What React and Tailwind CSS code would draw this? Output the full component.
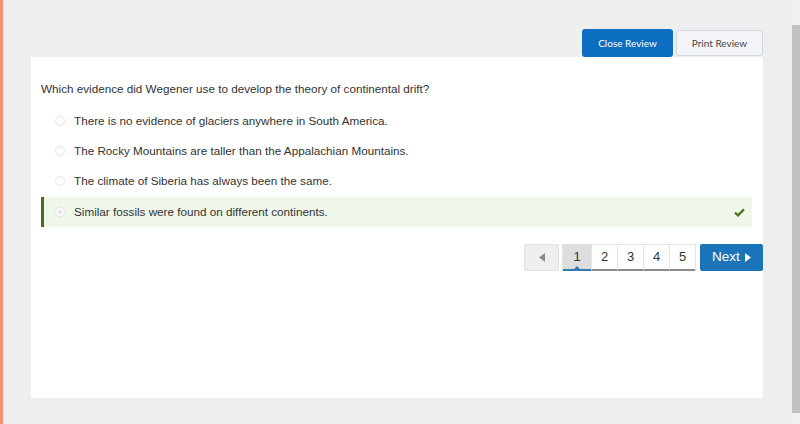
import React from "react";

const options = [
  "There is no evidence of glaciers anywhere in South America.",
  "The Rocky Mountains are taller than the Appalachian Mountains.",
  "The climate of Siberia has always been the same.",
];

function Radio({ checked }) {
  return (
    <span className="flex h-[10px] w-[10px] items-center justify-center rounded-full border border-[#e6e6e6] bg-white">
      {checked && <span className="h-[4px] w-[4px] rounded-full bg-[#e2e2e2]" />}
    </span>
  );
}

export default function App() {
  return (
    <div
      className="flex h-[424px] w-[800px] overflow-hidden bg-[#eeeeee]"
      style={{ fontFamily: '"Liberation Sans", Arial, sans-serif' }}
    >
      <div className="w-[3px] shrink-0 bg-[#f7916d]" />
      <div className="flex flex-1 flex-col pl-[28px] pr-[29px] pt-[29px]">
        <div className="flex justify-end gap-[3px]">
          <button
            className="h-[28px] w-[91px] rounded-[3px] bg-[#0b6ec0] text-[10px] text-white"
            style={{ fontFamily: "Lato, sans-serif" }}
          >
            Close Review
          </button>
          <button
            className="mt-[1px] h-[26px] w-[87px] rounded-[3px] border border-[#d3d8e0] bg-[#f3f5f9] text-[10px] text-[#444]"
            style={{ fontFamily: "Lato, sans-serif" }}
          >
            Print Review
          </button>
        </div>
        <div className="h-[341px] bg-white pl-[10px] pr-[11px] pt-[22px]">
          <div className="flex h-[20px] items-center text-[11.7px] text-[#333]">
            Which evidence did Wegener use to develop the theory of continental drift?
          </div>
          <div className="mt-[7px] flex flex-col">
            {options.map((o) => (
              <div key={o} className="flex h-[30px] items-center pl-[14px] text-[11.7px] text-[#333]">
                <Radio />
                <span className="ml-[9px]">{o}</span>
              </div>
            ))}
            <div className="mt-[1px] flex h-[30px] items-center border-l-[3px] border-[#4f6b22] bg-[#eef7ea] pl-[11px] pr-[7px] text-[11.7px] text-[#333]">
              <Radio checked />
              <span className="ml-[9px] flex-1">Similar fossils were found on different continents.</span>
              <svg width="11" height="9" viewBox="0 0 11 9">
                <path d="M1 4.6 L4 7.4 L10 1.4" fill="none" stroke="#4a7a1b" strokeWidth="2.2" />
              </svg>
            </div>
          </div>
          <div className="mr-[-11px] mt-[17px] flex justify-end">
            <button className="flex h-[27px] w-[35px] items-center justify-center rounded-[2px] border border-[#e2e2e2] bg-[#efefef]">
              <svg width="6" height="9" viewBox="0 0 6 9">
                <path d="M6 0 L0 4.5 L6 9 Z" fill="#8a8a8a" />
              </svg>
            </button>
            <div className="ml-[3px] flex h-[27px] border border-b-0 border-[#e4e4e4]">
              {[1, 2, 3, 4, 5].map((n) => (
                <div
                  key={n}
                  className={
                    n === 1
                      ? "relative flex w-[28px] shrink-0 items-center justify-center border-b-2 border-[#2f7bb3] bg-[#dddddd] text-[13px] text-[#333]"
                      : "flex w-[26px] shrink-0 items-center justify-center border-b-2 border-l border-b-[#8c8c8c] border-l-[#e4e4e4] bg-white text-[13px] text-[#333]"
                  }
                >
                  {n}
                  {n === 1 && (
                    <span className="absolute bottom-0 left-1/2 -ml-[3px] h-0 w-0 border-x-[3px] border-b-[3px] border-x-transparent border-b-[#2f7bb3]" />
                  )}
                </div>
              ))}
            </div>
            <button className="ml-[4px] flex h-[27px] w-[63px] items-center justify-center gap-[5px] rounded-[2px] bg-[#1b74b9] text-[13.5px] text-white">
              Next
              <svg width="6" height="9" viewBox="0 0 6 9">
                <path d="M0 0 L6 4.5 L0 9 Z" fill="#fff" />
              </svg>
            </button>
          </div>
        </div>
      </div>
      <div className="flex w-[8px] shrink-0 flex-col bg-[#f1f1f1]">
        <div className="h-[25px]" />
        <div className="h-[388px] bg-[#c1c1c1]" />
      </div>
    </div>
  );
}
